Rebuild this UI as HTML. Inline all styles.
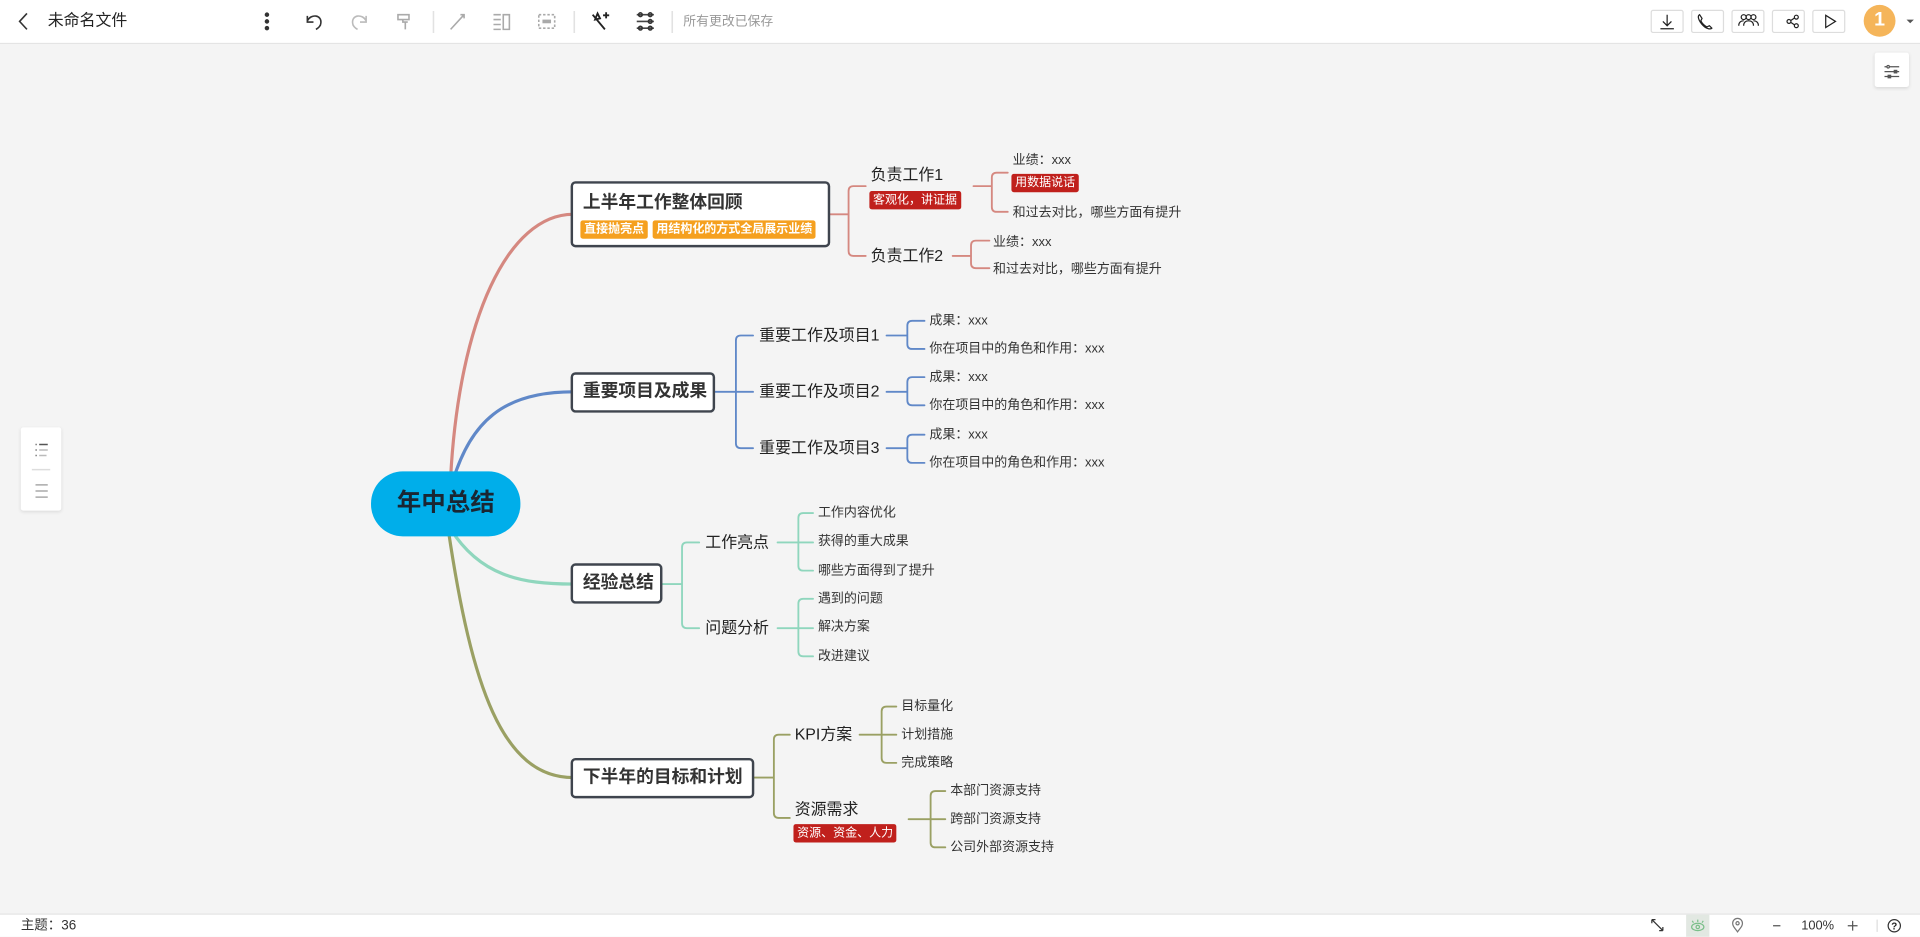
<!DOCTYPE html>
<html><head><meta charset="utf-8"><style>
*{margin:0;padding:0;box-sizing:border-box}
html,body{width:1920px;height:937px;overflow:hidden;background:#f4f4f4;font-family:"Liberation Sans","Noto Sans CJK SC",sans-serif}
#w{position:absolute;left:0;top:0;width:1568px;height:765px;transform:scale(1.22449);transform-origin:0 0}
.a{position:absolute;white-space:nowrap}
.t{position:absolute;white-space:nowrap;line-height:16px;color:#222}
.c{font-size:13px}
.g{font-size:10.6px;color:#333}
.box{position:absolute;background:#fff;border:2px solid #3f454e;border-radius:4px;font-weight:bold;font-size:14.5px;color:#333;padding-left:8px}
.tag{position:absolute;color:#fff;font-size:9.8px;line-height:15px;border-radius:2px;padding:0 3px;white-space:nowrap}
.tb{position:absolute;top:8px;width:27px;height:19px;border:1px solid #ddd;border-radius:2px;background:#fff}
</style></head><body><div id="w">
<!-- top bar -->
<div class="a" style="left:0;top:0;width:1568px;height:36px;background:#fff;border-bottom:1px solid #e4e4e4"></div>
<svg class="a" style="left:0;top:0" width="1568" height="36" fill="none" stroke="#333" stroke-width="1.3">
<path d="M22 11 L16 17.5 L22 24"/>
<circle cx="218" cy="12" r="1.2" fill="#333"/><circle cx="218" cy="17.5" r="1.2" fill="#333"/><circle cx="218" cy="23" r="1.2" fill="#333"/>
<path d="M251 13 L251 18 L256 18 M251 17 C254 11 263 12 262 19 C262 21 260 23 258 24"/>
<path d="M299 13 L299 18 L294 18 M299 17 C296 11 287 12 288 19 C288 21 290 23 292 24" stroke="#bbb"/>
<path d="M325 12 h9 v4 h-9z M329 16 v2 h4 M331 18 v6" stroke="#aaa"/>
<line x1="354" y1="9" x2="354" y2="27" stroke="#e2e2e2"/>
<path d="M368 24 L379 12 M376 12 h3 v3" stroke="#aaa"/>
<path d="M403 12 h6 M403 16 h6 M403 20 h6 M403 24 h6 M411 12 h5 v12 h-5z" stroke="#aaa"/>
<rect x="440" y="12" width="13" height="11" stroke="#aaa" stroke-dasharray="2 1.5"/><rect x="443" y="16" width="7" height="3" fill="#aaa" stroke="none"/>
<line x1="469" y1="9" x2="469" y2="27" stroke="#e2e2e2"/>
<path d="M484 12 L494 24 M488 11 l2 4 l-4 1z M495 10 v5 M492.5 12.5 h5" stroke="#222" stroke-width="1.5"/>
<path d="M520 12 h14 M520 17.5 h14 M520 23 h14" stroke="#444"/><circle cx="523" cy="12" r="1.5"/><circle cx="531" cy="17.5" r="1.5"/><circle cx="523" cy="23" r="1.5"/><circle cx="531" cy="12" r="1.5"/><circle cx="531" cy="23" r="1.5"/>
<line x1="549" y1="9" x2="549" y2="27" stroke="#e2e2e2"/>
</svg>
<div class="t" style="left:39px;top:9px;font-size:13px;color:#222">未命名文件</div>
<div class="t" style="left:558px;top:10px;font-size:10.5px;color:#999">所有更改已保存</div>
<div class="tb" style="left:1348px"></div><div class="tb" style="left:1381px"></div><div class="tb" style="left:1414px"></div><div class="tb" style="left:1447px"></div><div class="tb" style="left:1480px"></div>
<svg class="a" style="left:1340px;top:0" width="228" height="36" fill="none" stroke="#222" stroke-width="1">
<path d="M21.5 12 v9 M18 17.5 l3.5 3.5 l3.5 -3.5 M16 23.5 h11"/>
<path d="M48 12 c-2 1 -1 5 3 9 c3 3 6 3 7 2 l-2 -2 l-2 1 c-2 -1 -4 -3 -5 -5 l1 -2z"/>
<circle cx="84" cy="14" r="2"/><circle cx="88" cy="14" r="2"/><circle cx="92" cy="14" r="2"/><path d="M80 21 c0 -3 2 -4 4 -4 M88 17 c-2 0 -4 1 -4 4 M88 17 c2 0 4 1 4 4 M92 17 c2 0 4 1 4 4"/>
<circle cx="121" cy="17.5" r="1.6"/><circle cx="127" cy="14" r="1.6"/><circle cx="127" cy="21" r="1.6"/><path d="M122.5 16.7 l3 -2 M122.5 18.3 l3 2"/>
<path d="M151 12.5 l8 5 l-8 5z"/>
</svg>
<div class="a" style="left:1522px;top:4px;width:26px;height:26px;border-radius:50%;background:#f5b55a;color:#fff;font-weight:bold;font-size:16px;line-height:26px;text-align:center">1</div>
<div class="a" style="left:1557px;top:16px;border:3px solid transparent;border-top:3px solid #555"></div>
<!-- right panel -->
<div class="a" style="left:1531px;top:43px;width:28px;height:28px;background:#fff;border-radius:2px;box-shadow:0 1px 3px rgba(0,0,0,.12)"></div>
<svg class="a" style="left:1531px;top:43px" width="28" height="28" stroke="#555" stroke-width="1"><path d="M8 11.5 h12 M8 15.5 h12 M8 19.5 h12"/><circle cx="11" cy="11.5" r="1" fill="#fff"/><rect x="16" y="14.5" width="2" height="2" fill="#555"/><rect x="11" y="18.5" width="2" height="2" fill="#555"/></svg>
<!-- left panel -->
<div class="a" style="left:17px;top:349px;width:33px;height:68px;background:#fff;border-radius:2px;box-shadow:0 1px 3px rgba(0,0,0,.1)"></div>
<svg class="a" style="left:17px;top:349px" width="33" height="68" stroke-width="1.2"><path d="M12 14h1 M12 18.5h1 M12 23h1" stroke="#666"/><path d="M15 14h7" stroke="#555"/><path d="M15 18.5h7 M15 23h6" stroke="#bbb"/><path d="M9 34.5h15" stroke="#ddd"/><path d="M12 47h10 M12 52h10 M12 57h10" stroke="#aaa"/></svg>
<!-- bottom bar -->
<div class="a" style="left:0;top:746px;width:1568px;height:19px;background:#fff;border-top:1px solid #e4e4e4"></div>
<div class="t" style="left:17px;top:748px;font-size:11px;color:#333">主题：36</div>
<div class="a" style="left:1377px;top:747px;width:19px;height:18px;background:#e2e8e2"></div>
<svg class="a" style="left:1340px;top:746px" width="228" height="19" fill="none" stroke="#333" stroke-width="1"><path d="M9 5 l9 9 M9 5 h3 M9 5 v3 M18 14 h-3 M18 14 v-3"/><ellipse cx="46.5" cy="11" rx="5" ry="3" stroke="#7bbf8a"/><circle cx="46.5" cy="11" r="1.4" stroke="#7bbf8a"/><path d="M42 6 l1 1.5 M46.5 5 v2 M51 6 l-1 1.5" stroke="#7bbf8a"/><path d="M79 15 c-3 -4 -4 -5 -4 -7 a4 4 0 0 1 8 0 c0 2 -1 3 -4 7z" stroke="#777"/><circle cx="79" cy="8" r="1.3" stroke="#777"/><path d="M108 10 h6" stroke="#555"/><path d="M169 10 h8 M173 6 v8" stroke="#555"/><line x1="193" y1="5" x2="193" y2="15" stroke="#ddd"/><circle cx="207" cy="10" r="5"/></svg>
<div class="t" style="left:1471px;top:748px;font-size:10.5px;color:#333">100%</div>
<div class="t" style="left:1544.5px;top:749px;font-size:8px;color:#222;font-weight:bold">?</div>
<!-- mind map lines -->
<svg class="a" style="left:0;top:0" width="1568" height="765" fill="none" stroke-linecap="round">
<g stroke-width="2.6">
<path d="M368 390 C375 260 415 175 468 175" stroke="#d58880"/>
<path d="M370 392 C385 345 410 320 468 320" stroke="#6088c8"/>
<path d="M368 432 C392 470 425 477 468 477" stroke="#8fd6bd"/>
<path d="M366 432 C385 560 410 635 468 635" stroke="#9aa063"/>
</g>
<g stroke-width="1.5" stroke="#d58880">
<path d="M678 175 H693 M707 152 H697 Q693 152 693 156 V205 Q693 209 697 209 H707"/>
<path d="M795 152 H810 M823 141 H814 Q810 141 810 145 V169 Q810 173 814 173 H823"/>
<path d="M778 209 H793 M808 196.5 H797 Q793 196.5 793 200.5 V215 Q793 219 797 219 H808"/>
</g>
<g stroke-width="1.5" stroke="#6088c8">
<path d="M584 320 H601 M615 274 H605 Q601 274 601 278 V362 Q601 366 605 366 H615 M601 320 H615"/>
<path d="M724 274 H741 M755 262 H745 Q741 262 741 266 V281 Q741 285 745 285 H755"/>
<path d="M724 320 H741 M755 308 H745 Q741 308 741 312 V327 Q741 331 745 331 H755"/>
<path d="M724 366 H741 M755 355 H745 Q741 355 741 359 V374 Q741 378 745 378 H755"/>
</g>
<g stroke-width="1.5" stroke="#8fd6bd">
<path d="M541 477 H557 M571 443 H561 Q557 443 557 447 V509 Q557 513 561 513 H571"/>
<path d="M635 443 H652 M664 419 H656 Q652 419 652 423 V462 Q652 466 656 466 H664 M652 443 H664"/>
<path d="M635 513 H652 M664 489 H656 Q652 489 652 493 V532 Q652 536 656 536 H664 M652 513 H664"/>
</g>
<g stroke-width="1.5" stroke="#9aa063">
<path d="M616 635 H632 M645 600 H636 Q632 600 632 604 V664 Q632 668 636 668 H645"/>
<path d="M702 600 H720 M732 577 H724 Q720 577 720 581 V619 Q720 623 724 623 H732 M720 600 H732"/>
<path d="M742 669 H760 M772 646 H764 Q760 646 760 650 V688 Q760 692 764 692 H772 M760 669 H772"/>
</g>
</svg>
<!-- root -->
<div class="a" style="left:303px;top:385px;width:122px;height:53px;border-radius:26px;background:#00aeea;color:#1a2633;font-weight:bold;font-size:20px;line-height:53px;text-align:center">年中总结</div>
<!-- branch 1 -->
<div class="box" style="left:466px;top:148px;width:212px;height:54px"><div class="a" style="left:8px;top:6px;line-height:20px">上半年工作整体回顾</div></div>
<div class="tag" style="left:474px;top:180px;background:#f5a01f;font-weight:bold">直接抛亮点</div>
<div class="tag" style="left:533px;top:180px;background:#f5a01f;font-weight:bold">用结构化的方式全局展示业绩</div>
<div class="t c" style="left:711px;top:135px">负责工作1</div>
<div class="tag" style="left:710px;top:156px;background:#c0201c">客观化，讲证据</div>
<div class="t c" style="left:711px;top:201px">负责工作2</div>
<div class="t g" style="left:827px;top:123px">业绩：xxx</div>
<div class="tag" style="left:826px;top:142px;background:#c0201c">用数据说话</div>
<div class="t g" style="left:827px;top:166px">和过去对比，哪些方面有提升</div>
<div class="t g" style="left:811px;top:190px">业绩：xxx</div>
<div class="t g" style="left:811px;top:212px">和过去对比，哪些方面有提升</div>
<!-- branch 2 -->
<div class="box" style="left:466px;top:304px;width:118px;height:33px;line-height:29px">重要项目及成果</div>
<div class="t c" style="left:620px;top:266px">重要工作及项目1</div>
<div class="t c" style="left:620px;top:312px">重要工作及项目2</div>
<div class="t c" style="left:620px;top:358px">重要工作及项目3</div>
<div class="t g" style="left:759px;top:254px">成果：xxx</div>
<div class="t g" style="left:759px;top:277px">你在项目中的角色和作用：xxx</div>
<div class="t g" style="left:759px;top:300px">成果：xxx</div>
<div class="t g" style="left:759px;top:323px">你在项目中的角色和作用：xxx</div>
<div class="t g" style="left:759px;top:347px">成果：xxx</div>
<div class="t g" style="left:759px;top:370px">你在项目中的角色和作用：xxx</div>
<!-- branch 3 -->
<div class="box" style="left:466px;top:460px;width:75px;height:33px;line-height:29px">经验总结</div>
<div class="t c" style="left:576px;top:435px">工作亮点</div>
<div class="t c" style="left:576px;top:505px">问题分析</div>
<div class="t g" style="left:668px;top:411px">工作内容优化</div>
<div class="t g" style="left:668px;top:434px">获得的重大成果</div>
<div class="t g" style="left:668px;top:458px">哪些方面得到了提升</div>
<div class="t g" style="left:668px;top:481px">遇到的问题</div>
<div class="t g" style="left:668px;top:504px">解决方案</div>
<div class="t g" style="left:668px;top:528px">改进建议</div>
<!-- branch 4 -->
<div class="box" style="left:466px;top:619px;width:150px;height:33px;line-height:29px">下半年的目标和计划</div>
<div class="t c" style="left:649px;top:592px">KPI方案</div>
<div class="t c" style="left:649px;top:653px">资源需求</div>
<div class="tag" style="left:648px;top:673px;background:#c0201c">资源、资金、人力</div>
<div class="t g" style="left:736px;top:569px">目标量化</div>
<div class="t g" style="left:736px;top:592px">计划措施</div>
<div class="t g" style="left:736px;top:615px">完成策略</div>
<div class="t g" style="left:776px;top:638px">本部门资源支持</div>
<div class="t g" style="left:776px;top:661px">跨部门资源支持</div>
<div class="t g" style="left:776px;top:684px">公司外部资源支持</div>
</div></body></html>
